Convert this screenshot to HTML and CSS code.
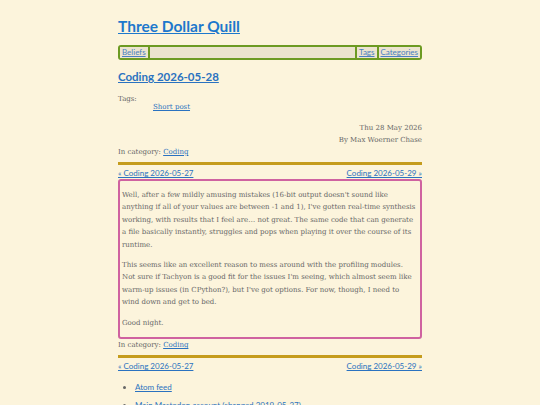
FILE: index.html
```html
<!DOCTYPE html>
<html>
<head>
<meta charset="utf-8">
<link rel="stylesheet" href="styles.css">
</head>
<body>
<div class="page">
  <header class="site-header">
    <h1 class="site-title"><a href="#">Three Dollar Quill</a></h1>
    <nav class="site-nav">
      <a class="nav-item" href="#">Beliefs</a>
      <span class="nav-fill"></span>
      <a class="nav-item" href="#">Tags</a>
      <a class="nav-item last" href="#">Categories</a>
    </nav>
  </header>
  <article class="post">
    <h2 class="post-title"><a href="#">Coding 2026-05-28</a></h2>
    <dl class="tags">
      <dt>Tags:</dt>
      <dd><a href="#">Short post</a></dd>
    </dl>
    <div class="meta">
      <div>Thu 28 May 2026</div>
      <div>By Max Woerner Chase</div>
    </div>
    <div class="category">In category: <a href="#">Coding</a></div>
    <div class="pager">
      <a href="#">« Coding 2026-05-27</a>
      <a href="#">Coding 2026-05-29 »</a>
    </div>
    <div class="content">
      <p>Well, after a few mildly amusing mistakes (16-bit output doesn't sound like anything if all of your values are between -1 and 1), I've gotten real-time synthesis working, with results that I feel are… not great. The same code that can generate a file basically instantly, struggles and pops when playing it over the course of its runtime.</p>
      <p>This seems like an excellent reason to mess around with the profiling modules. Not sure if Tachyon is a good fit for the issues I'm seeing, which almost seem like warm-up issues (in CPython?), but I've got options. For now, though, I need to wind down and get to bed.</p>
      <p>Good night.</p>
    </div>
    <div class="category">In category: <a href="#">Coding</a></div>
    <div class="pager">
      <a href="#">« Coding 2026-05-27</a>
      <a href="#">Coding 2026-05-29 »</a>
    </div>
  </article>
  <ul class="links">
    <li><a href="#">Atom feed</a></li>
    <li><a href="#">Main Mastodon account (changed 2019-05-27)</a></li>
  </ul>
</div>
</body>
</html>
```
FILE: styles.css
```css
html, body {
  margin: 0;
  padding: 0;
  background: #fcf4dc;
}
body {
  font-family: "DejaVu Serif", serif;
  font-size: 7px;
  color: #666;
}
a {
  color: #2a72c0;
}
.page {
  width: 304px;
  margin: 0 auto;
  padding-top: 15px;
}
.site-title {
  margin: 0;
  font-family: Lato, sans-serif;
  font-size: 15.5px;
  font-weight: bold;
  line-height: 22px;
}
.site-title a {
  color: #1d78cc;
}
.site-nav {
  margin-top: 8px;
  display: flex;
  border: 2px solid #6c9a22;
  border-radius: 3px;
  background: #ebe3cd;
  font-family: Lato, sans-serif;
  font-size: 8px;
  line-height: 11px;
}
.nav-item {
  padding: 0 2px;
  background: #ece4cf;
  color: #4a7fc0;
}
.nav-fill {
  flex: 1;
  border-left: 2px solid #6c9a22;
  border-right: 2px solid #6c9a22;
  background: #ebe3cd;
}
.nav-item.last {
  border-left: 2px solid #6c9a22;
}
.post-title {
  margin: 8px 0 0;
  font-family: Lato, sans-serif;
  font-size: 11.5px;
  font-weight: bold;
  line-height: 18px;
}
.tags {
  margin: 9px 0 0;
  line-height: 8px;
}
.tags dt {
  margin: 0;
}
.tags dd {
  margin: 0 0 0 35px;
}
.meta {
  margin-top: 11px;
  text-align: right;
  line-height: 12px;
}
.category {
  line-height: 12px;
}
.pager {
  margin-top: 4px;
  border-top: 3px solid #c59c1c;
  padding-top: 3px;
  display: flex;
  justify-content: space-between;
  font-family: Lato, sans-serif;
  font-size: 8px;
  line-height: 10px;
}
.content {
  margin-top: 1px;
  border: 2px solid #cf62a0;
  border-radius: 3px;
  padding: 0 2px;
  line-height: 12.4px;
}
.content p {
  margin: 8px 0;
}
.links {
  margin: 8px 0 0;
  padding-left: 17px;
  font-family: Lato, sans-serif;
  font-size: 8px;
  line-height: 17.5px;
}
```
